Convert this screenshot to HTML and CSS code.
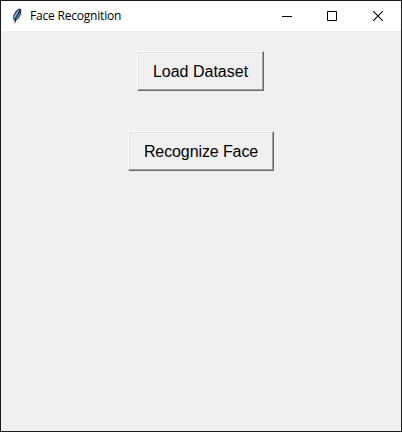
FILE: index.html
```html
<!DOCTYPE html>
<html lang="en">
<head>
<meta charset="utf-8">
<title>Face Recognition</title>
<link rel="stylesheet" href="styles.css">
</head>
<body>
<div class="window">
  <header class="titlebar">
    <svg class="feather" width="12" height="18" viewBox="0 0 12 18">
      <path d="M9 1.5 L10.3 2.5 L10 7 L8 11 L5 13.8 L3 13.5 L2 11 L2.5 8 L4.5 4.5 L7 2Z" fill="#202830"/>
      <path d="M8.6 2.3 L7 3.3 L4.6 6.5 L3 9.5 L3.2 12.5 L4.2 12.5 L6 9Z" fill="#86b8ea"/>
      <path d="M9.4 4 L9 7.5 L7 11 L5 12.8 L5.2 11 L7.5 7Z" fill="#4d88d0"/>
      <path d="M8.5 4 L4.5 11 L4 16.2" fill="none" stroke="#10151c" stroke-width=".9"/>
    </svg>
    <span class="title">Face Recognition</span>
    <div class="controls">
      <span class="control"><svg width="10" height="10" viewBox="0 0 10 10"><path d="M0 5.5H10" stroke="#000"/></svg></span>
      <span class="control"><svg width="10" height="10" viewBox="0 0 10 10"><path d="M.5 .5H9.5V9.5H.5Z" fill="none" stroke="#000"/></svg></span>
      <span class="control"><svg width="10" height="10" viewBox="0 0 10 10"><path d="M0 0L10 10M10 0L0 10" stroke="#000" stroke-width="1.1"/></svg></span>
    </div>
  </header>
  <main class="content">
    <button class="button load">Load Dataset</button>
    <button class="button recognize">Recognize Face</button>
  </main>
</div>
</body>
</html>
```

FILE: styles.css
```css
* {
  box-sizing: border-box;
}

body {
  margin: 0;
}

.window {
  display: flex;
  flex-direction: column;
  width: 402px;
  height: 432px;
  border: 1px solid #1c1a1d;
  background: #f0f0f0;
}

.titlebar {
  display: flex;
  align-items: center;
  height: 30px;
  padding-left: 10px;
  background: #fff;
}

.feather {
  margin-right: 7px;
}

.title {
  font: 12px/16px "Open Sans", "Noto Sans", sans-serif;
  letter-spacing: -0.2px;
  color: #000;
  white-space: nowrap;
}

.controls {
  display: flex;
  margin-left: auto;
}

.control {
  display: flex;
  align-items: center;
  justify-content: center;
  width: 45px;
  height: 28px;
}

.control:last-child {
  width: 47px;
}

.content {
  display: flex;
  flex: 1;
  flex-direction: column;
  align-items: center;
  gap: 40px;
  padding-top: 20px;
}

.button {
  height: 40px;
  padding: 2px 0 0;
  border: 1px solid;
  border-color: #fff #696969 #696969 #fff;
  background: #f0f0f0;
  box-shadow: inset -1px -1px #a0a0a0, inset 1px 1px #e3e3e3;
  font: 16px/20px "Liberation Sans", Arial, sans-serif;
  color: #000;
}

.load {
  width: 127px;
  margin-right: 1px;
}

.recognize {
  width: 146px;
  letter-spacing: -0.1px;
}
```
